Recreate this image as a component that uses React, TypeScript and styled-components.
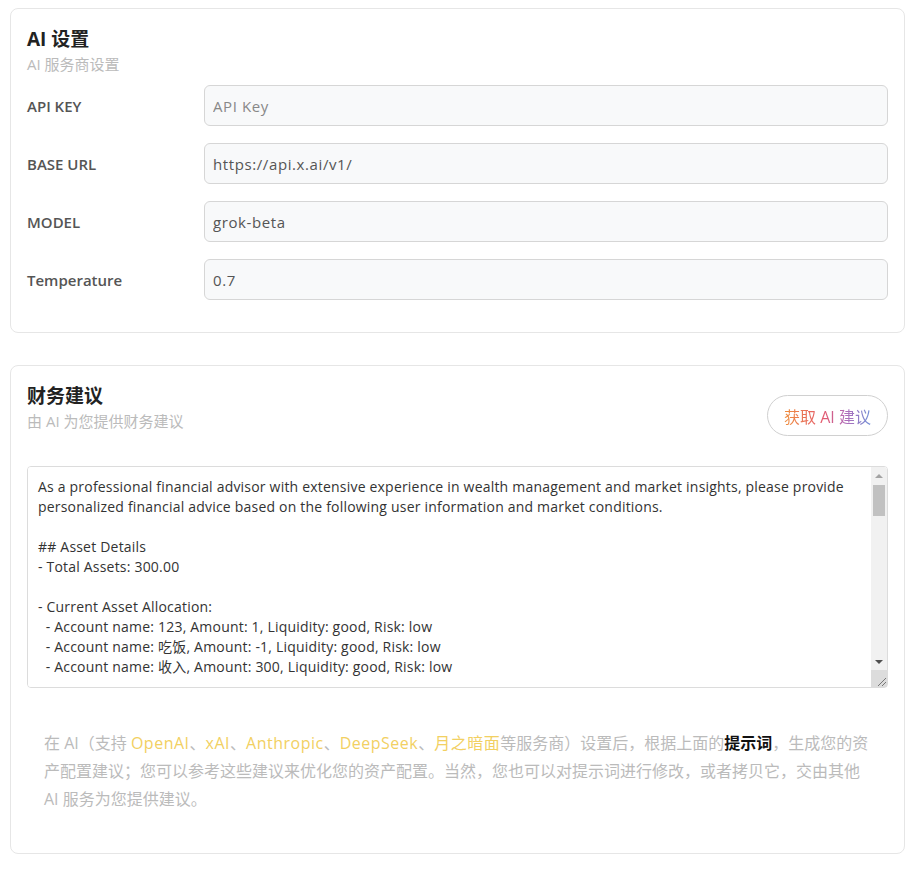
import React from 'react';
import styled, { createGlobalStyle } from 'styled-components';

const GlobalStyle = createGlobalStyle`
  body {
    margin: 0;
    background: #fff;
    font-family: "Open Sans", "Noto Sans CJK SC", sans-serif;
    color: #333;
  }
`;

const Page = styled.div`
  padding: 8px 11px 16px 10px;
  display: flex;
  flex-direction: column;
  gap: 32px;
`;

const Card = styled.section`
  border: 1px solid #e6e6e6;
  border-radius: 8px;
  padding: 16px 16px 32px;
  background: #fff;
`;

const Header = styled.div`
  display: flex;
  justify-content: space-between;
  align-items: flex-end;
`;

const Title = styled.h2`
  margin: 0;
  font-size: 19px;
  line-height: 28px;
  font-weight: 700;
  color: #222;
`;

const Subtitle = styled.div`
  font-size: 15px;
  line-height: 22px;
  color: #bbb;
`;

const Fields = styled.div`
  display: grid;
  gap: 17px;
  margin-top: 10px;
`;

const FieldRow = styled.div`
  display: grid;
  grid-template-columns: 177px 1fr;
  align-items: center;
`;

const Label = styled.label`
  font-size: 15px;
  font-weight: 600;
  color: #555;
`;

const Input = styled.input`
  height: 41px;
  box-sizing: border-box;
  width: 100%;
  padding: 0 8px;
  border: 1px solid #d6d6d6;
  border-radius: 6px;
  background: #f8f9fa;
  font-family: inherit;
  font-size: 15px;
  letter-spacing: 0.6px;
  color: #555;
  outline: none;

  &::placeholder {
    color: #888;
  }
`;

const AskButton = styled.button`
  height: 41px;
  padding: 0 16px;
  border: 1px solid #d0d0d0;
  border-radius: 21px;
  background: #fff;
  font-family: inherit;
  font-size: 16px;
  cursor: pointer;
  margin-bottom: -4px;
`;

const GradientText = styled.span`
  background: linear-gradient(90deg, #ef8f3c 0%, #e4596e 45%, #b36bb8 70%, #6f8fd6 100%);
  -webkit-background-clip: text;
  background-clip: text;
  color: transparent;
`;

const PromptWrap = styled.div`
  position: relative;
  margin-top: 34px;
`;

const PromptBox = styled.textarea`
  display: block;
  box-sizing: border-box;
  width: 100%;
  height: 222px;
  padding: 10px 27px 10px 10px;
  border: 1px solid #dcdcdc;
  border-radius: 4px;
  font-family: inherit;
  font-size: 14px;
  line-height: 20px;
  letter-spacing: 0.2px;
  color: #333;
  resize: none;
  outline: none;
  scrollbar-width: none;
`;

/* drawn scrollbar, sits over the textarea's right edge */
const ScrollBar = styled.div`
  position: absolute;
  top: 1px;
  right: 1px;
  bottom: 1px;
  width: 16px;
  display: flex;
  flex-direction: column;
  background: #f1f1f1;
  border-radius: 0 3px 3px 0;
  pointer-events: none;
`;

const Arrow = styled.div<{ $down?: boolean }>`
  height: 17px;
  display: flex;
  align-items: center;
  justify-content: center;

  &::before {
    content: '';
    border-left: 4px solid transparent;
    border-right: 4px solid transparent;
    ${(p) =>
      p.$down ? 'border-top: 4px solid #505050;' : 'border-bottom: 4px solid #a3a3a3;'}
  }
`;

const Track = styled.div`
  flex: 1;
  padding: 1px 2px;
`;

const Thumb = styled.div`
  height: 31px;
  background: #c1c1c1;
`;

const Corner = styled.div`
  height: 17px;
  background: #dcdcdc;
  display: flex;
  align-items: flex-end;
  justify-content: flex-end;
`;

const Note = styled.p`
  margin: 41px 0 8px;
  padding: 0 17px;
  font-size: 16px;
  line-height: 28px;
  color: #bbb;
  text-spacing-trim: space-all;
`;

const Vendor = styled.span`
  color: #f2d062;
  letter-spacing: 0.5px;
`;

const Strong = styled.b`
  color: #111;
`;

const prompt = `As a professional financial advisor with extensive experience in wealth management and market insights, please provide personalized financial advice based on the following user information and market conditions.

## Asset Details
- Total Assets: 300.00

- Current Asset Allocation:
  - Account name: 123, Amount: 1, Liquidity: good, Risk: low
  - Account name: 吃饭, Amount: -1, Liquidity: good, Risk: low
  - Account name: 收入, Amount: 300, Liquidity: good, Risk: low

## Income and Expenses
- Monthly Income: 300.00
- Monthly Expenses: 1.00
- Net Cash Flow: 299.00

## Market Conditions
- Please take the current macroeconomic environment, interest rate trends and inflation into account.

## Requirements
1. Evaluate the current asset allocation and point out its strengths and weaknesses.
2. Provide suggestions for optimizing the asset allocation, including specific proportions.
3. Analyze liquidity and risk, and give risk control advice.
4. Provide short-term and long-term financial planning suggestions.
5. Recommend suitable investment products or strategies.

Please answer in a clear and structured way, with concrete and actionable advice.`;

const fields = [
  { label: 'API KEY', value: '', placeholder: 'API Key' },
  { label: 'BASE URL', value: 'https://api.x.ai/v1/', placeholder: '' },
  { label: 'MODEL', value: 'grok-beta', placeholder: '' },
  { label: 'Temperature', value: '0.7', placeholder: '' },
];

const App = () => {
  return (
    <Page>
      <GlobalStyle />
      <Card>
        <Title>AI 设置</Title>
        <Subtitle>AI 服务商设置</Subtitle>
        <Fields>
          {fields.map((f) => (
            <FieldRow key={f.label}>
              <Label>{f.label}</Label>
              <Input defaultValue={f.value} placeholder={f.placeholder} />
            </FieldRow>
          ))}
        </Fields>
      </Card>

      <Card>
        <Header>
          <div>
            <Title>财务建议</Title>
            <Subtitle>由 AI 为您提供财务建议</Subtitle>
          </div>
          <AskButton>
            <GradientText>获取 AI 建议</GradientText>
          </AskButton>
        </Header>
        <PromptWrap>
          <PromptBox defaultValue={prompt} />
          <ScrollBar>
            <Arrow />
            <Track>
              <Thumb />
            </Track>
            <Arrow $down />
            <Corner>
              <svg width="14" height="14" viewBox="0 0 14 14">
                <path d="M13 5 L5 13 M13 9 L9 13" stroke="#777" strokeWidth="1" />
              </svg>
            </Corner>
          </ScrollBar>
        </PromptWrap>
        <Note>
          在 AI（支持 <Vendor>OpenAI</Vendor>、<Vendor>xAI</Vendor>、<Vendor>Anthropic</Vendor>、
          <Vendor>DeepSeek</Vendor>、<Vendor>月之暗面</Vendor>等服务商）设置后，根据上面的
          <Strong>提示词</Strong>，生成您的资产配置建议；您可以参考这些建议来优化您的资产配置。当然，您也可以对提示词进行修改，或者拷贝它，交由其他 AI 服务为您提供建议。
        </Note>
      </Card>
    </Page>
  );
};

export default App;
